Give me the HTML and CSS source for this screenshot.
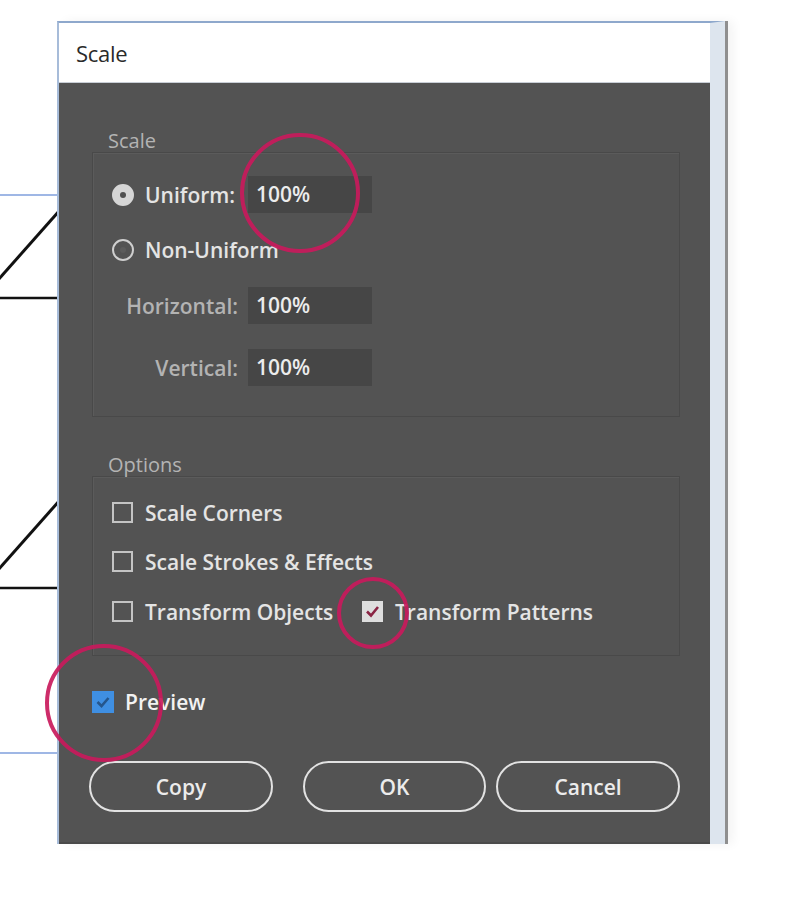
FILE: index.html
```html
<!DOCTYPE html>
<html>
<head>
<meta charset="utf-8">
<link rel="stylesheet" href="styles.css">
</head>
<body>
<div class="stage">
  <svg class="art" width="800" height="906" viewBox="0 0 800 906">
    <line x1="0" y1="195" x2="60" y2="195" stroke="#7f9fdc" stroke-width="1.5"/>
    <line x1="-2" y1="280" x2="60" y2="210" stroke="#111" stroke-width="3"/>
    <line x1="0" y1="298" x2="60" y2="298" stroke="#111" stroke-width="2.5"/>
    <line x1="-2" y1="570" x2="60" y2="500" stroke="#111" stroke-width="3"/>
    <line x1="0" y1="588" x2="60" y2="588" stroke="#111" stroke-width="2.5"/>
    <line x1="0" y1="753" x2="60" y2="753" stroke="#7f9fdc" stroke-width="1.5"/>
  </svg>

  <div class="window">
    <div class="titlebar"><span class="title">Scale</span></div>
    <div class="body">
      <div class="group-label">Scale</div>
      <div class="group scale-group">
        <div class="field-row">
          <label class="radio-label"><span class="radio on"></span><span>Uniform:</span></label>
          <div class="input">100%</div>
        </div>
        <div class="field-row nonuni">
          <label class="radio-label"><span class="radio"></span><span>Non-Uniform</span></label>
        </div>
        <div class="field-row hz">
          <span class="dim-label">Horizontal:</span>
          <div class="input">100%</div>
        </div>
        <div class="field-row vt">
          <span class="dim-label">Vertical:</span>
          <div class="input">100%</div>
        </div>
      </div>

      <div class="group-label opt-label">Options</div>
      <div class="group opt-group">
        <div class="check-row"><span class="check"></span><span>Scale Corners</span></div>
        <div class="check-row r2"><span class="check"></span><span>Scale Strokes &amp; Effects</span></div>
        <div class="check-row r3">
          <div class="check-item first"><span class="check"></span><span>Transform Objects</span></div>
          <div class="check-item"><span class="check checked">
            <svg width="21" height="21" viewBox="0 0 21 21"><path d="M5 10.5 L9 14.5 L16 6" fill="none" stroke="#8a2444" stroke-width="2.6"/></svg>
          </span><span>Transform Patterns</span></div>
        </div>
      </div>

      <div class="check-row preview"><span class="check blue">
        <svg width="22" height="22" viewBox="0 0 22 22"><path d="M5.5 11 L9.5 15 L16.5 7" fill="none" stroke="#25568c" stroke-width="2.6"/></svg>
      </span><span class="bright">Preview</span></div>

      <div class="buttons">
        <button class="btn copy">Copy</button>
        <button class="btn ok">OK</button>
        <button class="btn cancel">Cancel</button>
      </div>
    </div>
  </div>

  <svg class="marks" width="800" height="906" viewBox="0 0 800 906">
    <circle cx="300" cy="193" r="58" fill="none" stroke="#c91a5c" stroke-width="4" opacity="0.92"/>
    <circle cx="373" cy="613" r="34" fill="none" stroke="#c91a5c" stroke-width="4" opacity="0.92"/>
    <circle cx="104" cy="703" r="57" fill="none" stroke="#c91a5c" stroke-width="4" opacity="0.92"/>
  </svg>
</div>
</body>
</html>
```
FILE: styles.css
```css
html, body {
  margin: 0;
  padding: 0;
  background: #ffffff;
}
.stage {
  position: relative;
  width: 800px;
  height: 906px;
  overflow: hidden;
  background: #ffffff;
  font-family: "Open Sans", "Noto Sans", "DejaVu Sans", sans-serif;
}
.art {
  position: absolute;
  left: 0;
  top: 0;
}
.marks {
  position: absolute;
  left: 0;
  top: 0;
  pointer-events: none;
}
.window {
  position: relative;
  margin: 21px 0 0 57px;
  width: 651px;
  border-top: 2px solid #8ea8cc;
  border-left: 2px solid #a7bcd9;
  border-right: 15px solid #dde5ee;
  box-shadow: 3px 0 0 #8f8f8f, 8px 0 10px rgba(0,0,0,0.05);
}
.titlebar {
  height: 59px;
  background: #ffffff;
  display: flex;
  align-items: center;
  padding-left: 17px;
  border-bottom: 1px solid #c9ced6;
}
.title {
  font-size: 22px;
  font-weight: 500;
  color: #2a2a2a;
  letter-spacing: -0.3px;
}
.body {
  background: #535353;
  height: 761px;
  padding-top: 45px;
  box-sizing: border-box;
  color: #e4e4e4;
  font-size: 21px;
  font-weight: 600;
  border-bottom: 2px solid #4a4a4a;
}
.group-label {
  margin-left: 49px;
  height: 25px;
  line-height: 25px;
  color: #b4b4b4;
  font-size: 20px;
  font-weight: 500;
}
.group {
  margin: 0 30px 0 33px;
  border: 1px solid #494949;
  box-shadow: inset 1px 1px 0 #5b5b5b;
  box-sizing: border-box;
}
.scale-group {
  margin-top: -1px;
  height: 265px;
  padding: 23px 0 0 19px;
}
.field-row {
  display: grid;
  grid-template-columns: 126px 124px;
  column-gap: 10px;
  align-items: center;
  height: 37px;
}
.field-row.nonuni { margin-top: 18px; }
.field-row.hz { margin-top: 19px; }
.field-row.vt { margin-top: 25px; }
.radio-label {
  display: flex;
  align-items: center;
  gap: 11px;
  white-space: nowrap;
}
.radio {
  width: 18px;
  height: 18px;
  border-radius: 50%;
  border: 2px solid #cfcfcf;
  box-sizing: content-box;
  flex: none;
  position: relative;
}
.radio::after {
  content: "";
  position: absolute;
  left: 6px;
  top: 6px;
  width: 6px;
  height: 6px;
  border-radius: 50%;
  background: #5c5c5c;
}
.radio.on {
  background: #d6d6d6;
  border-color: #d6d6d6;
}
.radio.on::after {
  background: #505050;
}
.dim-label {
  justify-self: end;
  color: #b3b3b3;
}
.input {
  height: 37px;
  line-height: 37px;
  background: #464646;
  padding-left: 8px;
  color: #ececec;
  box-sizing: border-box;
}
.opt-label {
  margin-top: 35px;
}
.opt-group {
  margin-top: -1px;
  height: 180px;
  padding: 17px 0 0 19px;
}
.check-row {
  display: flex;
  align-items: center;
  height: 37px;
}
.check-row.r2 { margin-top: 12px; }
.check-row.r3 { margin-top: 13px; }
.check-item {
  display: flex;
  align-items: center;
}
.check-item.first {
  width: 250px;
}
.check {
  width: 17px;
  height: 17px;
  border: 2px solid #c4c4c4;
  margin-right: 12px;
  flex: none;
  position: relative;
}
.check svg {
  position: absolute;
  left: -2px;
  top: -2px;
}
.check.checked {
  background: #dedede;
  border-color: #dedede;
}
.check-row.preview {
  margin: 27px 0 0 33px;
}
.check.blue {
  width: 18px;
  height: 18px;
  background: #3f8fe2;
  border-color: #3f8fe2;
  margin-right: 11px;
}
.bright {
  color: #f2f2f2;
}
.buttons {
  display: flex;
  margin: 41px 0 0 30px;
}
.btn {
  height: 51px;
  border: 2.5px solid #e2e2e2;
  border-radius: 26px;
  background: #535353;
  color: #ececec;
  font-family: "Open Sans", "Noto Sans", "DejaVu Sans", sans-serif;
  font-size: 21px;
  font-weight: 600;
  padding: 0;
  box-sizing: border-box;
}
.btn.copy { width: 184px; }
.btn.ok { width: 183px; margin-left: 30px; }
.btn.cancel { width: 184px; margin-left: 10px; }
```
